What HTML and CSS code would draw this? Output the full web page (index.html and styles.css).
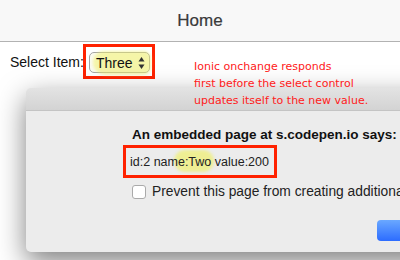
FILE: index.html
```html
<!DOCTYPE html>
<html lang="en">
<head>
    <meta charset="UTF-8">
    <title>Home</title>
    <link rel="stylesheet" href="styles.css">
</head>
<body>
    <div class="nav-bar">
        <h1>Home</h1>
    </div>
    <div class="content">
        <span class="label">Select Item:</span>
        <span class="mark mark-select">
            <span class="select">
                <span class="glow"></span>
                <span class="select-value">Three</span>
                <svg class="arrows" width="7" height="14" viewBox="0 0 7 14">
                    <path d="M3.5 1 L6.5 5.5 L0.5 5.5 Z" fill="#333"/>
                    <path d="M3.5 13 L6.5 8.5 L0.5 8.5 Z" fill="#333"/>
                </svg>
            </span>
        </span>
    </div>

    <div class="dialog">
        <div class="dialog-bar"></div>
        <div class="dialog-body">
            <div class="dialog-title">An embedded page at s.codepen.io says:</div>
            <div class="mark mark-message">
                <span class="glow glow-word"></span>
                <span class="message">id:2 name:Two value:200</span>
            </div>
            <label class="prevent">
                <span class="checkbox"></span>
                <span>Prevent this page from creating additional dialogs</span>
            </label>
            <div class="dialog-actions">
                <span class="btn-ok"></span>
            </div>
        </div>
    </div>

    <div class="note">
        Ionic onchange responds<br>
        first before the select control<br>
        updates itself to the new value.
    </div>
</body>
</html>
```

FILE: styles.css
```css
body {
    margin: 0;
    width: 400px;
    height: 260px;
    overflow: hidden;
    position: relative;
    background-color: #fff;
    font-family: "Liberation Sans", Arial, sans-serif;
    color: #111;
}
.nav-bar {
    height: 41px;
    background-color: #f8f8f8;
    border-bottom: 1px solid #b2b2b2;
    display: flex;
    align-items: center;
    justify-content: center;
}
.nav-bar h1 {
    margin: 0;
    font-size: 17px;
    font-weight: normal;
    color: #3a3a3a;
    -webkit-text-stroke: 0.2px #3a3a3a;
}
.content {
    display: flex;
    align-items: center;
    padding: 2px 0 0 10px;
}
.label {
    flex-shrink: 0;
    white-space: nowrap;
    font-size: 14px;
    width: 73px;
}
.mark {
    border: 3px solid #ff2200;
}
.mark-select {
    display: flex;
    padding: 5px 2px 3px 3px;
}
.select {
    position: relative;
    box-sizing: border-box;
    display: flex;
    align-items: center;
    justify-content: space-between;
    width: 61px;
    height: 21px;
    padding: 0 4px 0 6px;
    border: 1px solid #a4a4a4;
    border-radius: 5px;
    background-color: #fbfbf0;
    font-size: 14px;
}
.select .glow {
    position: absolute;
    left: 3px;
    top: -2px;
    width: 58px;
    height: 24px;
    border-radius: 12px 8px 8px 14px;
    background-color: rgba(240, 240, 110, 0.55);
    filter: blur(1.5px);
}
.select-value,
.arrows {
    position: relative;
}
.dialog {
    position: absolute;
    left: 26px;
    top: 88px;
    width: 440px;
    height: 164px;
    background-color: #ececec;
    border-radius: 5px;
    overflow: hidden;
    box-shadow: 0 10px 28px rgba(0, 0, 0, 0.5);
}
.dialog-bar {
    height: 22px;
    background: linear-gradient(#e3e3e3, #d3d3d3);
    border-bottom: 1px solid #c4c4c4;
}
.dialog-body {
    padding: 16px 0 0 106px;
}
.dialog-title {
    font-size: 13.5px;
    font-weight: bold;
    color: #111;
}
.mark-message {
    position: relative;
    display: inline-block;
    margin: 3px 0 0 -9px;
    padding: 4px 5px 5px 4px;
    background-color: #ececec;
}
.message {
    position: relative;
    font-size: 12.5px;
    color: #222;
}
.glow-word {
    position: absolute;
    left: 48px;
    top: 2px;
    width: 40px;
    height: 22px;
    border-radius: 12px;
    background-color: rgba(240, 240, 110, 0.7);
    filter: blur(1.5px);
}
.prevent {
    display: flex;
    align-items: center;
    gap: 6px;
    margin-top: 6px;
    font-size: 13.8px;
    color: #222;
    white-space: nowrap;
}
.checkbox {
    width: 12px;
    height: 12px;
    border: 1px solid #aaa;
    border-radius: 3px;
    background-color: #fff;
}
.dialog-actions {
    margin: 21px 0 0 245px;
}
.btn-ok {
    display: block;
    width: 70px;
    height: 21px;
    border-radius: 4px;
    background: linear-gradient(#6aa8ff, #2c6cff);
}
.note {
    position: absolute;
    left: 194px;
    top: 58px;
    font-family: "DejaVu Sans", Verdana, sans-serif;
    font-size: 11px;
    line-height: 17px;
    color: #ff2020;
}
```
